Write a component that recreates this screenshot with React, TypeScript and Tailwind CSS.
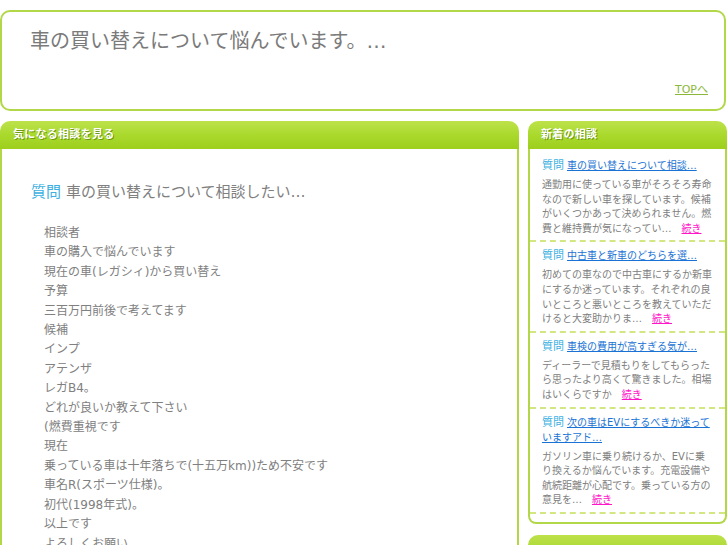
const font = "font-['DejaVu_Sans','Noto_Sans_CJK_JP',sans-serif]";

const bodyLines = [
  "相談者",
  "車の購入で悩んでいます",
  "現在の車(レガシィ)から買い替え",
  "予算",
  "三百万円前後で考えてます",
  "候補",
  "インプ",
  "アテンザ",
  "レガB4。",
  "どれが良いか教えて下さい",
  "(燃費重視です",
  "現在",
  "乗っている車は十年落ちで(十五万km))ため不安です",
  "車名R(スポーツ仕様)。",
  "初代(1998年式)。",
  "以上です",
  "よろしくお願い",
];

const news = [
  {
    title: "車の買い替えについて相談…",
    body: "通勤用に使っている車がそろそろ寿命なので新しい車を探しています。候補がいくつかあって決められません。燃費と維持費が気になってい…",
    wrap: false,
  },
  {
    title: "中古車と新車のどちらを選…",
    body: "初めての車なので中古車にするか新車にするか迷っています。それぞれの良いところと悪いところを教えていただけると大変助かりま…",
    wrap: false,
  },
  {
    title: "車検の費用が高すぎる気が…",
    body: "ディーラーで見積もりをしてもらったら思ったより高くて驚きました。相場はいくらですか",
    wrap: false,
  },
  {
    title: "次の車はEVにするべきか迷っていますアド…",
    body: "ガソリン車に乗り続けるか、EVに乗り換えるか悩んでいます。充電設備や航続距離が心配です。乗っている方の意見を…",
    wrap: true,
  },
];

function Bar({ title }: { title: string }) {
  return (
    <div className="h-[28px] rounded-t-[10px] bg-gradient-to-b from-[#bde24a] via-[#aad92c] to-[#9dcf1c] px-[13px] flex items-center text-[11px] font-bold tracking-wide text-white [text-shadow:1px_1px_0_#6f9a12]">
      {title}
    </div>
  );
}

export default function App() {
  return (
    <div className={`${font} bg-white min-h-screen w-[727px] overflow-hidden pt-[10px] pr-[1px]`}>
      <div className="h-[101px] border-2 border-[#b2d84a] rounded-[10px] flex flex-col px-[28px] pt-[15px]">
        <h1 className="text-[20px] leading-[28px] text-[#7a7a7a]">
          車の買い替えについて悩んでいます。…
        </h1>
        <div className="mt-auto mb-[9px] self-end -mr-[12px]">
          <a href="#" className="text-[11px] text-[#8cb83a] underline">TOPへ</a>
        </div>
      </div>

      <div className="flex gap-[9px] mt-[10px]">
        <div className="w-[519px] shrink-0">
          <Bar title="気になる相談を見る" />
          <div className="border-x-2 border-[#b2d84a] h-[420px] px-[29px] pt-[31px]">
            <div className="flex items-center gap-[5px] h-[24px]">
              <span className="text-[15px] text-[#3cb0e2]">質問</span>
              <span className="text-[15px] text-[#808080]">車の買い替えについて相談したい…</span>
            </div>
            <div className="mt-[20px] pl-[13px] text-[12px] leading-[19.4px] text-[#808080]">
              {bodyLines.map((l, i) => (
                <div key={i}>{l}</div>
              ))}
            </div>
          </div>
        </div>

        <div className="w-[199px] shrink-0">
          <Bar title="新着の相談" />
          <div className="border-x-2 border-b-2 border-[#b2d84a] rounded-b-[8px] pb-[8px]">
            {news.map((n, i) => (
              <div
                key={i}
                className={`border-b-2 border-dashed border-[#d2e782] px-[12px] pb-[4px] ${i === 0 ? "pt-[9px]" : "pt-[6px]"}`}
              >
                <div className={`text-[10px] leading-[15px] ${n.wrap ? "" : "whitespace-nowrap overflow-hidden"}`}>
                  <span className="text-[11px] text-[#3cb0e2] mr-[3px]">質問</span>
                  <a href="#" className="text-[#1a73d4] underline">{n.title}</a>
                </div>
                <p className="mt-[5px] text-[10px] leading-[14.6px] text-[#808080]">
                  {n.body}
                  <a href="#" className="ml-[10px] text-[#ff14c8] underline">続き</a>
                </p>
              </div>
            ))}
          </div>
          <div className="mt-[11px] h-[28px] rounded-t-[10px] bg-gradient-to-b from-[#bde24a] to-[#9dcf1c]" />
        </div>
      </div>
    </div>
  );
}
